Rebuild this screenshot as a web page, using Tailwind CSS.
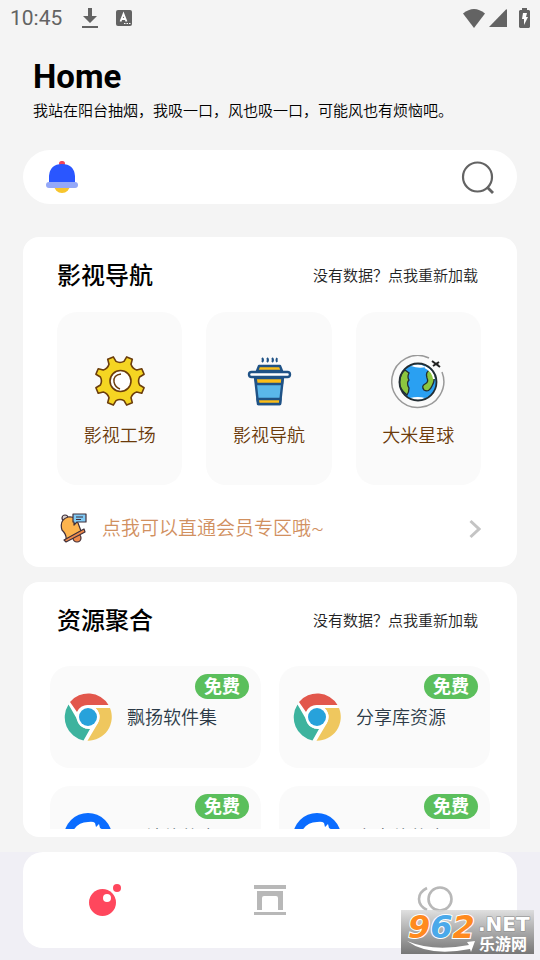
<!DOCTYPE html>
<html lang="zh-CN">
  <head>
    <meta charset="UTF-8" />
    <meta name="viewport" content="width=device-width, initial-scale=1.0" />
    <title>Home</title>
    <script src="https://cdn.jsdelivr.net/npm/@tailwindcss/browser@4"></script>
    <style>
      body { font-family: Roboto, 'Noto Sans CJK SC', sans-serif; }
    </style>
  </head>
  <body class="bg-[#f4f4f4] text-black h-screen flex flex-col overflow-hidden font-[350]">
    <!-- Icons used more than once -->
    <svg class="hidden" aria-hidden="true">
      <symbol id="chrome" viewBox="0 0 48 48">
        <circle cx="24" cy="24" r="23.5" fill="#fff" />
        <path d="M6 9A23.700 23.700 0 0 1 44.500 12H24A12 12 0 0 0 13 19Z" fill="#e2574c" />
        <path d="M4.500 11.500L13.500 27A12 12 0 0 0 26 36L19.500 47.500A23.700 23.700 0 0 1 4.500 11.500Z" fill="#3db39e" />
        <path d="M31.500 15H46A23.700 23.700 0 0 1 23.500 47.700L34 30A12 12 0 0 0 31.500 15Z" fill="#efc75e" />
        <circle cx="24" cy="24" r="11.500" fill="#fff" />
        <circle cx="24" cy="24" r="9" fill="#27a2db" />
      </symbol>
      <symbol id="bluebird" viewBox="0 0 48 48">
        <circle cx="24" cy="24" r="24" fill="#0a6cff" />
        <path d="M9 18Q14 9 24 9Q29 8 31 10L32 14L35 11L36 15L41 18V48H6Z" fill="#fff" />
      </symbol>
    </svg>

    <!-- Status bar -->
    <div class="flex h-9 shrink-0 items-center px-[10px] text-[#636363]">
      <span class="text-[21px] leading-9 font-normal">10:45</span>
      <svg class="ml-5 h-5 w-4" viewBox="0 0 16 20" fill="currentColor"><path d="M6 0h4v8h5l-7 7-7-7h5zM0 18h16v2H0z" /></svg>
      <svg class="ml-[18px] size-4" viewBox="0 0 16 16">
        <rect width="16" height="16" rx="2" fill="currentColor" />
        <path d="M4.500 11.500L7.500 4L10.500 11.500M5.500 9H9.500" fill="none" stroke="#fff" stroke-width="1.800" />
        <path d="M8 13.500h1.500M10.500 13.500H12M13 13.500h1.500" stroke="#fff" stroke-width="1.200" />
      </svg>
      <svg class="ml-auto h-[19px] w-[22px]" viewBox="0 0 22 19" fill="currentColor"><path d="M0 4.500Q11-4.500 22 4.500L11 19z" /></svg>
      <svg class="ml-1 size-[18px]" viewBox="0 0 18 18" fill="currentColor"><path d="M18 1V18H0L17 0.500Q18 0 18 1Z" /></svg>
      <svg class="ml-3 h-5 w-[11px]" viewBox="0 0 11 20">
        <path d="M3 0h5v2h2l1 1v16l-1 1H1l-1-1V3l1-1h2z" fill="currentColor" />
        <path d="M4 5h4L7 9h2L5 17V11H3z" fill="#fff" />
      </svg>
    </div>

    <!-- Header -->
    <header class="shrink-0 px-[33px] pt-[23px]">
      <h1 class="text-[33px] leading-9 font-bold">Home</h1>
      <p class="mt-[2px] text-[15px] leading-7">我站在阳台抽烟，我吸一口，风也吸一口，可能风也有烦恼吧。</p>
    </header>

    <main class="flex min-h-0 grow flex-col px-[23px] pt-[25px] pb-[15px]">
      <!-- Search -->
      <form class="flex h-[54px] shrink-0 items-center rounded-full bg-white px-[23px]">
        <svg class="h-8 w-8 shrink-0" viewBox="0 0 32 32">
          <rect x="13" y="0" width="6" height="5" rx="2.500" fill="#f0455a" />
          <circle cx="16" cy="24" r="8" fill="#f7c52d" />
          <path d="M3 22V15Q4 3 16 3T29 15V22Z" fill="#2a56ff" />
          <rect y="21" width="32" height="6" rx="3" fill="#94a8f8" />
        </svg>
        <input type="text" aria-label="搜索" class="mx-3 min-w-0 grow bg-transparent text-[18px] outline-none" />
        <button type="submit" aria-label="搜索" class="shrink-0">
          <svg class="size-[33px]" viewBox="0 0 33 33" fill="none" stroke="#636363" stroke-width="2.200"><circle cx="16.500" cy="16" r="14.500" /><path d="M26 26L32 32" stroke-width="2.800" /></svg>
        </button>
      </form>

      <!-- Movie navigation -->
      <section class="mt-[33px] shrink-0 rounded-2xl bg-white pl-[34px] pr-9 pt-[22px] pb-[22px]">
        <div class="flex items-center justify-between">
          <h2 class="text-[24px] leading-[34px] font-medium">影视导航</h2>
          <button type="button" class="mr-[3px] text-[15px] text-[#222]">没有数据？点我重新加载</button>
        </div>
        <div class="mt-[19px] grid grid-cols-3 gap-6 text-[18px] text-[#6b3a0a]">
          <a href="#" class="flex h-[173px] flex-col items-center rounded-[20px] bg-[#fafafa] pt-[43px]">
            <svg class="size-[52px]" viewBox="0 0 52 52" stroke="#6b3d0c" stroke-width="1.600" stroke-linejoin="round">
              <path fill="#f5d522" d="M30 6.400L32.700 1.900L38.300 4.200L37 9.300Q38.400 13.600 42.700 15L47.800 13.700L50.100 19.300L45.600 22Q43.500 26 45.600 30L50.100 32.700L47.800 38.300L42.700 37Q38.400 38.400 37 42.700L38.300 47.800L32.700 50.100L30 45.600Q26 43.500 22 45.600L19.300 50.100L13.700 47.800L15 42.700Q13.600 38.400 9.300 37L4.200 38.300L1.900 32.700L6.400 30Q8.500 26 6.400 22L1.900 19.300L4.200 13.700L9.300 15Q13.600 13.600 15 9.300L13.700 4.200L19.300 1.900L22 6.400Q26 8.500 30 6.400Z" />
              <circle cx="26.500" cy="26" r="10.500" fill="#fff" />
              <path d="M27 19Q19 20 20 27Q21 32 26 34" fill="none" stroke-width="1.400" />
            </svg>
            <span class="mt-[13px] leading-8">影视工场</span>
          </a>
          <a href="#" class="flex h-[173px] flex-col items-center rounded-[20px] bg-[#fafafa] pt-[43px]">
            <svg class="size-[52px]" viewBox="0 0 52 52" stroke="#1f5286" stroke-width="2.400" stroke-linejoin="round">
              <path d="M19 3q2 2 0 4M24 3q2 2 0 4M29 3q2 2 0 4M34 3q-1 2 0 4" fill="none" stroke-width="2" />
              <path d="M12 22L15 49H37L40 22Z" fill="#5ab7ea" />
              <path d="M12.500 23H39.500L39 29H13.500Z" fill="#fbbd18" />
              <path d="M14.500 44H37.500L37 49H15.500Z" fill="#fbbd18" />
              <path d="M14 16L16 11H37L39 16Z" fill="#fbbd18" />
              <rect x="6" y="17" width="41" height="5" rx="2.500" fill="#fff" />
            </svg>
            <span class="mt-[13px] leading-8">影视导航</span>
          </a>
          <a href="#" class="flex h-[173px] flex-col items-center rounded-[20px] bg-[#fafafa] pt-[43px]">
            <svg class="-mb-[2px] size-[54px]" viewBox="0 0 54 54" fill="none">
              <path d="M38 3A26 26 0 1 0 51 17" stroke="#999" stroke-width="1.500" />
              <circle cx="27" cy="27" r="18.500" fill="#2aa0f2" />
              <path d="M14 15L18 18Q16 22 18 25Q15 28 18 33Q18 37 16 40Q8 34 8.500 27Q9 19 14 15Z" fill="#8cc63f" stroke="#222d33" stroke-width="1.300" />
              <path d="M39 15Q34 17 36 23Q38 27 34 29Q30 31 33 35Q38 38 41 31Q45 24 42 18Z" fill="#8cc63f" stroke="#222d33" stroke-width="1.300" />
              <path d="M20 11Q27 7 35 12Q28 14 20 11ZM19 43Q27 41 34 43Q27 47 19 43Z" fill="#fff" />
              <path d="M34 12Q42 16 43 24" stroke="#fff" stroke-width="2" />
              <circle cx="27" cy="27" r="18.500" stroke="#222d33" stroke-width="1.800" />
              <path d="M41 6L49 12M48 7L42 11M45 8L47 10" stroke="#222" stroke-width="2" />
            </svg>
            <span class="mt-[13px] leading-8">大米星球</span>
          </a>
        </div>
        <a href="#" class="mt-[28px] flex items-center">
          <svg class="ml-[2px] h-8 w-[30px]" viewBox="0 0 30 32" stroke="#41303a" stroke-width="1.200" stroke-linejoin="round">
            <circle cx="6" cy="5" r="3" fill="#d9d2cf" />
            <circle cx="18" cy="25" r="4" fill="#f08b4b" />
            <path d="M3 17Q0 7 9 4Q17 3 19 10L22 18L7 27Q8 22 3 17Z" fill="#fdb44e" />
            <path d="M5 27L25 16L26 19L7 29Z" fill="#f08b4b" />
            <path d="M14 1H27V9H18L15 12V9H14Z" fill="#81cbf6" />
            <path d="M17 4H24M17 6.500H22" />
          </svg>
          <span class="ml-[13px] text-[19px] leading-8 text-[#d1905f]">点我可以直通会员专区哦~</span>
          <svg class="ml-auto h-5 w-3" viewBox="0 0 12 20" fill="none" stroke="#c4c4c4" stroke-width="3"><path d="M1.500 2L10 10L1.500 18" /></svg>
        </a>
      </section>

      <section class="mt-[15px] flex min-h-0 grow flex-col rounded-2xl bg-white px-[27px] pt-[22px] pb-2">
        <div class="flex shrink-0 items-center justify-between pl-[7px] pr-3">
          <h2 class="text-[24px] leading-[34px] font-medium">资源聚合</h2>
          <button type="button" class="text-[15px] text-[#222]">没有数据？点我重新加载</button>
        </div>
        <div class="mt-[28px] grid min-h-0 grow auto-rows-[102px] grid-cols-2 gap-[18px] overflow-hidden text-[18px] text-[#2c3a47]">
          <a href="#" class="relative flex items-center rounded-[20px] bg-[#fafafa] pl-[14px]">
            <svg class="size-12"><use href="#chrome" /></svg>
            <span class="ml-[15px]">飘扬软件集</span>
            <span class="absolute top-2 right-3 rounded-full bg-[#5bbf5c] px-[9px] leading-[25px] font-bold text-white">免费</span>
          </a>
          <a href="#" class="relative flex items-center rounded-[20px] bg-[#fafafa] pl-[14px]">
            <svg class="size-12"><use href="#chrome" /></svg>
            <span class="ml-[15px]">分享库资源</span>
            <span class="absolute top-2 right-3 rounded-full bg-[#5bbf5c] px-[9px] leading-[25px] font-bold text-white">免费</span>
          </a>
          <a href="#" class="relative flex items-center rounded-[20px] bg-[#fafafa] pl-[14px]">
            <svg class="size-12"><use href="#bluebird" /></svg>
            <span class="ml-[15px]">一站软件库</span>
            <span class="absolute top-2 right-3 rounded-full bg-[#5bbf5c] px-[9px] leading-[25px] font-bold text-white">免费</span>
          </a>
          <a href="#" class="relative flex items-center rounded-[20px] bg-[#fafafa] pl-[14px]">
            <svg class="size-12"><use href="#bluebird" /></svg>
            <span class="ml-[15px]">安卓软件库</span>
            <span class="absolute top-2 right-3 rounded-full bg-[#5bbf5c] px-[9px] leading-[25px] font-bold text-white">免费</span>
          </a>
        </div>
      </section>
    </main>

    <!-- Tab bar -->
    <footer class="relative shrink-0 bg-[#f0eff5] px-[23px] pb-3">
      <nav class="grid h-24 grid-cols-3 place-items-center rounded-[20px] bg-white">
        <a href="#" aria-label="首页">
          <svg class="size-8" viewBox="0 0 32 32" fill="#ff475d"><circle cx="13.500" cy="18.500" r="13.500" /><circle cx="28" cy="4" r="4" /><circle cx="18" cy="14" r="4" fill="#fff" /></svg>
        </a>
        <a href="#" aria-label="商店">
          <svg class="size-8" viewBox="0 0 32 32" fill="#b8b8b8"><path d="M0 1h32v4H0zM3 7h26v19h-5V14q0-2-2-2H10q-2 0-2 2v12H3zM0 28h32v3H0z" /></svg>
        </a>
        <a href="#" aria-label="我的">
          <svg class="h-8 w-9" viewBox="0 0 36 32" fill="none" stroke="#b8b8b8" stroke-width="2.600"><circle cx="23" cy="15" r="11.500" /><path d="M10 4Q2 8 2 15T10 26" /></svg>
        </a>
      </nav>
      <!-- Site mark over the bar -->
      <div class="absolute right-[6px] bottom-[6px] h-11 w-[133px] bg-linear-to-b from-[#d8d8d8]/80 to-[#777]">
        <svg class="size-full" viewBox="0 0 133 44" font-family="DejaVu Sans" font-weight="bold">
          <path d="M6 31Q32 42 68 35L66 32L74 31L70 42L69 39Q28 47 6 31Z" fill="#fff" />
          <text x="7" y="28" font-size="32" font-style="italic" stroke="#fff" stroke-width="2" paint-order="stroke">
            <tspan fill="#ff8a1e">9</tspan><tspan fill="#4aa9ea">6</tspan><tspan fill="#ff8a1e">2</tspan>
          </text>
          <text x="77" y="21" font-size="20" fill="#fff" stroke="#888" stroke-width="1" paint-order="stroke">.NET</text>
          <text x="78" y="40" font-size="16" fill="#fff" font-family="Noto Sans CJK SC">乐游网</text>
        </svg>
      </div>
    </footer>
  </body>
</html>
